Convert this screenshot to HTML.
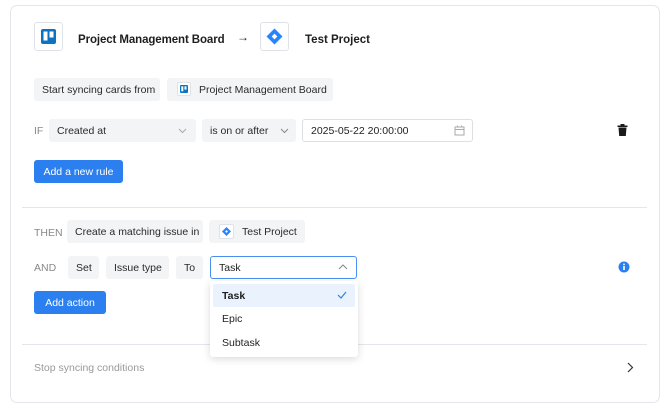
<!DOCTYPE html>
<html><head><style>
*{box-sizing:border-box;margin:0;padding:0}
body{width:670px;height:409px;background:#fff;font-family:"Liberation Sans",sans-serif;font-size:10.5px;color:#222;position:relative;overflow:hidden;white-space:nowrap}
.a{position:absolute}
.card{left:10px;top:5px;width:650px;height:398px;border:1px solid #e3e6ea;border-radius:7px}
.chip{position:absolute;background:#f3f4f5;border-radius:3px;height:23px;line-height:24px;padding:0 8px;color:#2a2a2a;overflow:hidden}
.ibox{position:absolute;width:29px;height:29px;border:1px solid #dfe2e6;border-radius:3px;background:#fff}
.btn{position:absolute;background:#2b7fef;color:#fff;border-radius:3px;height:23px;line-height:24px;text-align:center}
.lbl{position:absolute;color:#888;font-size:10.5px}
.hr{position:absolute;left:22px;width:625px;height:1px;background:#e3e6ea}
</style></head><body>
<div class="a card"></div>
<div class="ibox" style="left:34px;top:22px"><svg width="27" height="27" viewBox="0 0 27 27"><rect x="6" y="6" width="15" height="15" rx="2" fill="#0c73c2"/><rect x="8.5" y="8.5" width="4" height="9" fill="#fff"/><rect x="14.5" y="8.5" width="4" height="6" fill="#fff"/></svg></div>
<div class="a" style="left:78px;top:34px;font-weight:bold;font-size:11.5px;color:#1e1e1e;letter-spacing:-0.1px">Project Management Board</div>
<div class="a" style="left:237px;top:30px;font-size:12px">→</div>
<div class="ibox" style="left:260px;top:22px"><svg width="27" height="27" viewBox="0 0 27 27"><path d="M13.5 5.5 L21.5 13.5 L13.5 21.5 L5.5 13.5Z" fill="#2684ff"/><rect x="11.5" y="11.5" width="4" height="4" transform="rotate(45 13.5 13.5)" fill="#fff"/></svg></div>
<div class="a" style="left:305px;top:34px;font-weight:bold;font-size:11.5px;color:#1e1e1e">Test Project</div>

<div class="chip" style="left:34px;top:78px;width:126px">Start syncing cards from</div>
<div class="chip" style="left:167px;top:78px;width:166px;padding-left:32px">Project Management Board</div>
<div class="a" style="left:177px;top:82px;width:14px;height:14px;border:1px solid #dfe2e6;background:#fff;border-radius:2px"><svg width="12" height="12" viewBox="0 0 12 12"><rect x="2" y="2" width="8" height="8" rx="1" fill="#0c73c2"/><rect x="3.3" y="3.3" width="2" height="5" fill="#fff"/><rect x="6.5" y="3.3" width="2" height="3.3" fill="#fff"/></svg></div>

<div class="lbl" style="left:34px;top:125px">IF</div>
<div class="chip" style="left:49px;top:119px;width:147px">Created at<svg class="a" style="right:9px;top:9px" width="9" height="6" viewBox="0 0 9 6"><path d="M1 1L4.5 4.5L8 1" fill="none" stroke="#aaa"/></svg></div>
<div class="chip" style="left:202px;top:119px;width:94px">is on or after<svg class="a" style="right:7px;top:9px" width="9" height="6" viewBox="0 0 9 6"><path d="M1 1L4.5 4.5L8 1" fill="none" stroke="#888"/></svg></div>
<div class="a" style="left:302px;top:119px;width:171px;height:23px;border:1px solid #dcdfe3;border-radius:3px;padding:5px 8px;color:#222">2025-05-22 20:00:00
<svg class="a" style="right:7px;top:5px" width="11" height="11" viewBox="0 0 11 11"><rect x="1" y="2" width="9" height="8" fill="none" stroke="#aaa"/><path d="M1 4.5H10M3.5 0.5V2.5M7.5 0.5V2.5" stroke="#aaa"/></svg></div>
<svg class="a" style="left:617px;top:124px" width="11" height="12" viewBox="0 0 11 12"><rect x="0.5" y="1.5" width="10" height="1.5" fill="#1a1a1a"/><rect x="3.5" y="0" width="4" height="2" fill="#1a1a1a"/><path d="M1.5 3.5H9.5L8.8 12H2.2Z" fill="#1a1a1a"/></svg>
<div class="btn" style="left:34px;top:160px;width:89px">Add a new rule</div>

<div class="hr" style="top:207px"></div>

<div class="lbl" style="left:34px;top:227px">THEN</div>
<div class="chip" style="left:67px;top:220px;width:136px">Create a matching issue in</div>
<div class="chip" style="left:209px;top:220px;width:96px;padding-left:33px">Test Project</div>
<div class="a" style="left:219px;top:224px;width:15px;height:15px;border:1px solid #dfe2e6;background:#fff;border-radius:2px"><svg width="13" height="13" viewBox="0 0 13 13"><path d="M6.5 2L11 6.5L6.5 11L2 6.5Z" fill="#2684ff"/><rect x="5.5" y="5.5" width="2" height="2" transform="rotate(45 6.5 6.5)" fill="#fff"/></svg></div>

<div class="lbl" style="left:34px;top:262px">AND</div>
<div class="chip" style="left:68px;top:256px;width:31px">Set</div>
<div class="chip" style="left:106px;top:256px;width:63px">Issue type</div>
<div class="chip" style="left:176px;top:256px;width:27px">To</div>
<div class="a" style="left:210px;top:256px;width:147px;height:23px;border:1px solid #4a90f0;border-radius:3px;padding:5px 8px">Task<svg class="a" style="right:8px;top:7px" width="10" height="6" viewBox="0 0 10 6"><path d="M1 5L5 1L9 5" fill="none" stroke="#888"/></svg></div>
<svg class="a" style="left:618px;top:261px" width="12" height="12" viewBox="0 0 12 12"><circle cx="6" cy="6" r="5.5" fill="#2b7fef"/><rect x="5.2" y="5" width="1.6" height="4" fill="#fff"/><circle cx="6" cy="3.4" r="0.9" fill="#fff"/></svg>
<div class="btn" style="left:34px;top:291px;width:72px">Add action</div>

<div class="hr" style="top:344px"></div>
<div class="a" style="left:34px;top:362px;color:#999">Stop syncing conditions</div>
<svg class="a" style="left:626px;top:362px" width="8" height="11" viewBox="0 0 8 11"><path d="M2 1L6.5 5.5L2 10" fill="none" stroke="#333" stroke-width="1.2"/></svg>

<div class="a" style="left:210px;top:281px;width:148px;height:76px;background:#fff;border-radius:3px;box-shadow:0 2px 8px rgba(0,0,0,.15)">
<div class="a" style="left:3px;top:3px;width:142px;height:23px;background:#eaf2fe;border-radius:2px"></div>
<div class="a" style="left:12px;top:9px;font-weight:bold;color:#1e1e1e">Task</div>
<svg class="a" style="left:127px;top:10px" width="10" height="8" viewBox="0 0 10 8"><path d="M1 4L4 7L9 1" fill="none" stroke="#2b7fef" stroke-width="1.2"/></svg>
<div class="a" style="left:12px;top:32px">Epic</div>
<div class="a" style="left:12px;top:56px">Subtask</div>
</div>
</body></html>
